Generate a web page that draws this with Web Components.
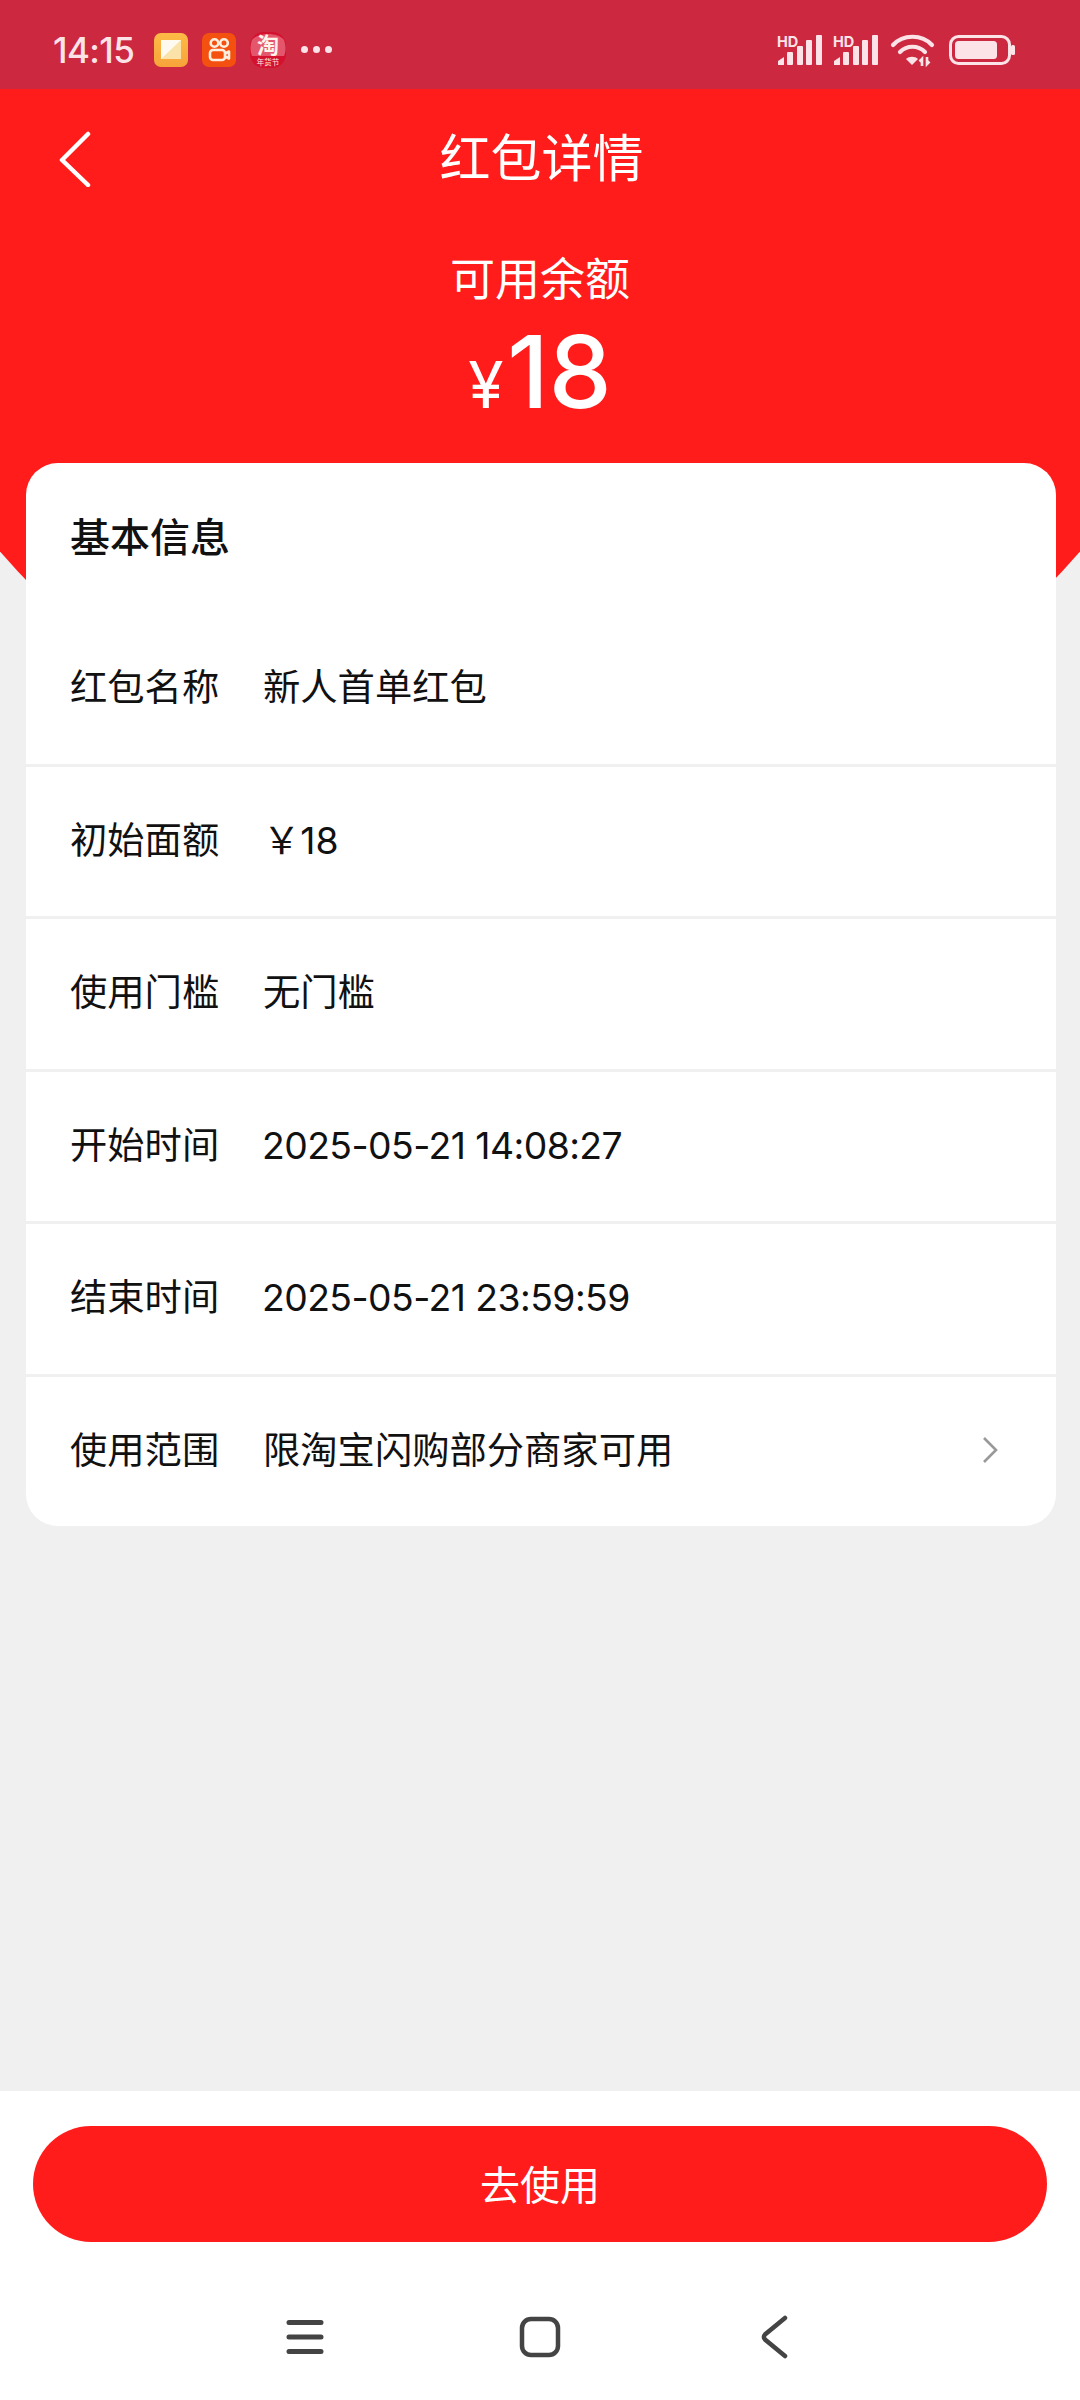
<!DOCTYPE html>
<html lang="zh">
<head>
<meta charset="utf-8">
<title>红包详情</title>
<style>
    html,body{ margin:0; padding:0; }
    body{
        width:1080px;
        height:2400px;
        overflow:hidden;
        background:#f0f0f0;
        font-family:"Inter","Noto Sans CJK SC",sans-serif;
        display:flex;
        flex-direction:column;
    }
    .num{ letter-spacing:-.55px; margin-left:-1px; }
</style>
</head>
<body>
<status-bar></status-bar>
<hero-header title="红包详情" label="可用余额" amount="18"></hero-header>
<info-card heading="基本信息">
    <info-row label="红包名称">新人首单红包</info-row>
    <info-row label="初始面额">￥18</info-row>
    <info-row label="使用门槛">无门槛</info-row>
    <info-row label="开始时间"><span class="num">2025-05-21 14:08:27</span></info-row>
    <info-row label="结束时间"><span class="num">2025-05-21 23:59:59</span></info-row>
    <info-row label="使用范围" arrow>限淘宝闪购部分商家可用</info-row>
</info-card>
<action-bar>去使用</action-bar>

<script>
    class StatusBar extends HTMLElement{
        constructor(){
            super();
            this.attachShadow({mode:'open'});
            const signal = `
                <svg width="46" height="32" viewBox="0 0 46 32">
                    <text x="0" y="13" font-family="Inter,sans-serif" font-size="14.5" font-weight="700" fill="#fbe3e8">HD</text>
                    <g fill="#fbe3e8">
                        <path d="M1 31v-4l6-4v8z"/>
                        <rect x="10" y="18" width="6" height="13" rx="1"/>
                        <rect x="20" y="12" width="6" height="19" rx="1"/>
                        <rect x="29" y="6" width="6" height="25" rx="1"/>
                        <rect x="39" y="1" width="6" height="30" rx="1"/>
                    </g>
                </svg>`;
            this.shadowRoot.innerHTML = `
                <style>
                    :host{
                        display:flex;
                        align-items:center;
                        height:89px;
                        flex:none;
                        box-sizing:border-box;
                        padding:10px 65px 0 53px;
                        background:#cc2840;
                        color:#fbe3e8;
                        font-family:"Inter","Roboto",sans-serif;
                    }
                    .time{ font-size:35px; font-weight:500; letter-spacing:-.6px; width:101px; }
                    .apps{ display:flex; gap:14px; align-items:center; }
                    .apps svg{ display:block; overflow:visible; }
                    .more{ display:flex; gap:5px; margin-left:15px; }
                    .more i{ width:7px; height:7px; border-radius:50%; background:#fbe3e8; }
                    .right{ margin-left:auto; display:flex; align-items:center; }
                    .right svg{ display:block; overflow:visible; }
                </style>
                <span class="time">14:15</span>
                <div class="apps">
                    <svg width="34" height="34" viewBox="0 0 34 34">
                        <defs>
                            <linearGradient id="y" x1="0" y1="0" x2="0" y2="1">
                                <stop offset="0" stop-color="#fdbb45"/><stop offset="1" stop-color="#f7a33a"/>
                            </linearGradient>
                        </defs>
                        <rect width="34" height="34" rx="7" fill="url(#y)"/>
                        <rect x="7" y="7" width="20" height="19" fill="#fbe2a8"/>
                        <path d="M7 7h20L7 26z" fill="#fffaf0"/>
                    </svg>
                    <svg width="34" height="34" viewBox="0 0 34 34">
                        <rect width="34" height="34" rx="7" fill="#f4500f"/>
                        <g fill="none" stroke="#ffeedd" stroke-width="2.6">
                            <circle cx="12.500" cy="10" r="3.800"/>
                            <circle cx="22" cy="10" r="3.800"/>
                            <rect x="8" y="17" width="15" height="10" rx="3"/>
                            <path d="M23 20.500l4-2v7l-4-2" stroke-linejoin="round"/>
                        </g>
                    </svg>
                    <svg width="36" height="36" viewBox="0 0 36 36">
                        <rect width="36" height="36" rx="14" fill="#d4122f"/>
                        <path d="M2 8C8 0 28 0 34 8c2 6 2 11 0 16H2C0 19 0 14 2 8z" fill="#e4566c"/>
                        <text x="18" y="21" text-anchor="middle" font-family="'Noto Sans CJK SC',sans-serif" font-size="22" font-weight="700" fill="#fff3ea">淘</text>
                        <text x="18" y="33" text-anchor="middle" font-family="'Noto Sans CJK SC',sans-serif" font-size="7.500" fill="#ffe8e0">年货节</text>
                    </svg>
                </div>
                <div class="more"><i></i><i></i><i></i></div>
                <div class="right">
                    ${signal}
                    <div style="width:10px"></div>
                    ${signal}
                    <svg width="44" height="34" viewBox="0 0 44 34" style="margin-left:12px">
                        <g fill="none" stroke="#fbe3e8" stroke-width="4.200" stroke-linecap="round">
                            <path d="M2 12C12 1 31 1 41 12"/>
                            <path d="M9 19C16 12 27 12 34 19"/>
                        </g>
                        <path d="M15 26l6 6 6-6c-3-3-9-3-12 0z" fill="#fbe3e8"/>
                        <path d="M31 33v-7l-2.500 2.500M36 24v7l2.500-2.500" fill="none" stroke="#fbe3e8" stroke-width="2.600"/>
                    </svg>
                    <svg width="66" height="30" viewBox="0 0 66 30" style="margin-left:14px">
                        <rect x="1.500" y="1.500" width="59" height="27" rx="8" fill="none" stroke="#fbe3e8" stroke-width="3"/>
                        <rect x="6" y="6" width="42" height="18" rx="3.500" fill="#fbe3e8"/>
                        <rect x="62" y="10" width="4" height="10" rx="1.500" fill="#fbe3e8"/>
                    </svg>
                </div>
            `;
        }
    }
    customElements.define('status-bar',StatusBar);

    class HeroHeader extends HTMLElement{
        constructor(){
            super();
            this.attachShadow({mode:'open'});
        }
        connectedCallback(){
            this.shadowRoot.innerHTML = `
                <style>
                    :host{
                        display:flex;
                        flex-direction:column;
                        flex:none;
                        height:600px;
                        margin-bottom:-226px;
                        background:#ff1c1a;
                        color:#fff;
                        clip-path:circle(713px at 540px -3px);
                        font-family:"Inter","Noto Sans CJK SC",sans-serif;
                    }
                    .top{
                        display:flex;
                        align-items:center;
                        justify-content:center;
                        height:139px;
                        position:relative;
                    }
                    .top svg{ position:absolute; left:58px; top:42px; display:block; }
                    h1{ margin:0; padding-left:3px; font-size:51px; font-weight:400; line-height:60px; }
                    .label{ margin-top:20px; text-align:center; font-size:45px; line-height:64px; }
                    .amount{
                        display:flex;
                        justify-content:center;
                        align-items:baseline;
                        font-weight:500;
                        font-size:100px;
                        line-height:110px;
                        margin-top:5px;
                    }
                    .amount span{ font-size:64px; font-weight:400; margin-right:4px; }
                </style>
                <div class="top">
                    <svg width="34" height="56" viewBox="0 0 34 56">
                        <path d="M30 3L4 29l26 25" fill="none" stroke="#fff" stroke-width="4.500" stroke-linecap="round" stroke-linejoin="round"/>
                    </svg>
                    <h1>${this.getAttribute('title')}</h1>
                </div>
                <div class="label">${this.getAttribute('label')}</div>
                <div class="amount"><span>¥</span>${this.getAttribute('amount')}</div>
            `;
        }
    }
    customElements.define('hero-header',HeroHeader);

    class InfoCard extends HTMLElement{
        constructor(){
            super();
            this.attachShadow({mode:'open'});
        }
        connectedCallback(){
            this.shadowRoot.innerHTML = `
                <style>
                    :host{
                        display:block;
                        flex:none;
                        position:relative;
                        box-sizing:border-box;
                        margin:0 24px 0 26px;
                        background:#fff;
                        border-radius:32px;
                        color:#111;
                        font-family:"Inter","Noto Sans CJK SC",sans-serif;
                    }
                    h2{
                        margin:0;
                        padding:46px 44px 0;
                        height:151px;
                        box-sizing:border-box;
                        font-size:40px;
                        font-weight:500;
                        line-height:58px;
                    }
                </style>
                <h2>${this.getAttribute('heading')}</h2>
                <slot></slot>
            `;
        }
    }
    customElements.define('info-card',InfoCard);

    class InfoRow extends HTMLElement{
        constructor(){
            super();
            this.attachShadow({mode:'open'});
        }
        connectedCallback(){
            const arrow = this.hasAttribute('arrow') ? `
                <svg class="arrow" width="20" height="30" viewBox="0 0 20 30">
                    <path d="M3 3l12 12L3 27" fill="none" stroke="#999" stroke-width="2.600"/>
                </svg>` : '';
            this.shadowRoot.innerHTML = `
                <style>
                    :host{
                        display:flex;
                        align-items:baseline;
                        height:152.500px;
                        box-sizing:border-box;
                        padding:47px 55px 0 44px;
                        font-size:37.300px;
                        line-height:54px;
                        border-bottom:3px solid #f0f0f0;
                    }
                    :host(:last-child){ border-bottom:none; height:149px; }
                    .label{ width:193px; flex:none; }
                    .value{ flex:1; }
                    .arrow{ display:block; flex:none; align-self:flex-start; margin-top:11px; }
                </style>
                <span class="label">${this.getAttribute('label')}</span>
                <span class="value"><slot></slot></span>
                ${arrow}
            `;
        }
    }
    customElements.define('info-row',InfoRow);

    class ActionBar extends HTMLElement{
        constructor(){
            super();
            this.attachShadow({mode:'open'});
            this.shadowRoot.innerHTML = `
                <style>
                    :host{
                        display:flex;
                        flex-direction:column;
                        margin-top:auto;
                        height:309px;
                        flex:none;
                        box-sizing:border-box;
                        padding:35px 33px 0;
                        background:#fff;
                        font-family:"Noto Sans CJK SC",sans-serif;
                    }
                    button{
                        display:block;
                        height:116px;
                        border:none;
                        border-radius:58px;
                        padding:0 0 3px;
                        background:#ff1c1a;
                        color:#fff;
                        font:400 40px "Noto Sans CJK SC",sans-serif;
                    }
                    .nav{
                        display:flex;
                        justify-content:center;
                        align-items:center;
                        margin-top:71px;
                        height:48px;
                        padding-right:4px;
                    }
                    .nav svg{ display:block; }
                </style>
                <button type="button"><slot></slot></button>
                <div class="nav">
                    <svg width="38" height="40" viewBox="0 0 38 40">
                        <g stroke="#444" stroke-width="5" stroke-linecap="round">
                            <path d="M3 5.500h32M3 20h32M3 34.500h32"/>
                        </g>
                    </svg>
                    <svg width="42" height="42" viewBox="0 0 42 42" style="margin-left:195px">
                        <rect x="3" y="3" width="36" height="36" rx="9" fill="none" stroke="#444" stroke-width="4.500"/>
                    </svg>
                    <svg width="30" height="44" viewBox="0 0 30 44" style="margin-left:199px">
                        <path d="M25 3L5 19.500c-1.500 1.500-1.500 3.500 0 5L25 41" fill="none" stroke="#444" stroke-width="4.500" stroke-linecap="round"/>
                    </svg>
                </div>
            `;
        }
    }
    customElements.define('action-bar',ActionBar);
</script>
</body>
</html>
